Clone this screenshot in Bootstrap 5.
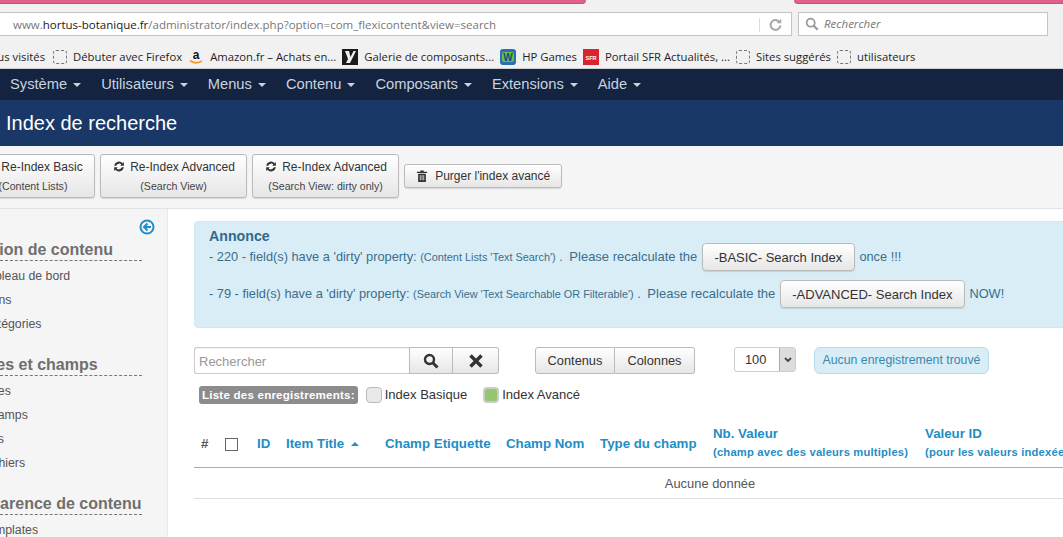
<!DOCTYPE html>
<html lang="fr">
<head>
<meta charset="UTF-8">
<title>Index de recherche</title>
<link href="https://cdn.jsdelivr.net/npm/bootstrap@5.3.0/dist/css/bootstrap.min.css" rel="stylesheet">
<style>
html, body { height: 537px; overflow: hidden; }
body { font-family: "Liberation Sans", Arial, sans-serif; font-size: 13px; color: #333; background: #fff; width: 1063px; }
.ff-chrome { font-family: "Open Sans", "Noto Sans", sans-serif; }

.tabstrip { height: 12px; background: #f1f1f1; }
.pink-tab { height: 4px; background: #e0608c; border-bottom: 1px solid #b9577c; }
.pink-tab.one { width: 586px; border-radius: 0 0 8px 0; }
.pink-tab.two { width: 269px; margin-left: auto; border-radius: 0 0 0 8px; }

.urlrow { height: 24px; background: #f1f1f1; padding-right: 10px; }
.urlbox { height: 24px; width: 792px; margin-right: 6px; background: #fff; border: 1px solid #c4c4c4; border-left: 0; color: #777; font-size: 11.5px; padding: 1px 0 0 13px; }
.urlbox b { font-weight: 400; color: #1a1a1a; }
.reload { width: 32px; height: 14px; margin-left: auto; border-left: 1px solid #ddd; }
.searchbox { width: 250px; height: 24px; background: #fff; border: 1px solid #c4c4c4; color: #777; font-style: italic; font-size: 11.5px; padding-left: 6px; gap: 5px; }

.bookmarks { height: 33px; background: #f1f1f1; border-bottom: 1px solid #cfcfcf; font-size: 11.3px; color: #1f1f1f; white-space: nowrap; padding-top: 10px; }
.bookmarks .bm-first { margin-left: -33px; margin-right: 8px; }
.bm { gap: 6px; margin-right: 6px; }
.bm-empty { width: 14px; height: 14px; border: 1px dashed #777; border-radius: 3px; flex: none; }
.bm-icon { width: 16px; height: 16px; flex: none; }

.adminnav { height: 31px; background: #14233f; color: #c9d2df; font-size: 14.7px; padding-left: 10px; gap: 20px; white-space: nowrap; }
.caret-down { width: 0; height: 0; border-left: 4px solid transparent; border-right: 4px solid transparent; border-top: 4px solid #c9d2df; display: inline-block; margin-left: 6px; vertical-align: 2px; }

.titlebar { height: 46px; background: #1a3867; color: #fff; font-size: 20px; padding-left: 6px; }

.toolbar { height: 63px; background: #f5f5f5; border-bottom: 1px solid #e3e3e3; padding-top: 8px; gap: 5px; }
.tb-btn { height: 44px; background: linear-gradient(#fff, #e6e6e6); border: 1px solid #bbb; border-radius: 3px; color: #333; font-size: 12px; line-height: 1; text-align: center; padding-top: 5px; box-shadow: 0 1px 1px rgba(0,0,0,.12); flex: none; white-space: nowrap; }
.tb-btn small { display: block; font-size: 10.6px; margin-top: 8px; color: #444; }
.tb-btn svg { vertical-align: -2px; margin-right: 4px; }
.tb-basic { width: 124px; margin-left: -29px; }
.tb-search, .tb-dirty { width: 147px; }
.tb-purge { height: 24px; width: 158px; margin-top: 10px; padding-top: 5px; }

.sidepane { width: 168px; height: 329px; background: #f5f5f5; border-right: 1px solid #e8e8e8; flex: none; overflow: hidden; position: relative; }
.collapse-arrow { position: absolute; top: 10px; left: 139px; }
.side-head { font-size: 16px; font-weight: 700; color: #6f6f6f; border-bottom: 1px dashed #777; width: 142px; white-space: nowrap; line-height: 18px; height: 20px; overflow: hidden; }
.side-head span { display: block; margin-left: -31px; }
.side-head.first { margin-top: 32px; }
.side-list { font-size: 12.3px; color: #555; white-space: nowrap; line-height: 24px; margin-bottom: 20px; padding-top: 3px; }
.side-list div { margin-left: -18px; }
.side-list div.short { margin-left: -22px; }

.mainpane { flex: 1 1 0; min-width: 0; padding: 12px 0 0 26px; overflow: hidden; }
.notice { width: 880px; height: 107px; background: #d9edf7; border: 1px solid #d0e8f2; border-radius: 4px; color: #3a6d8c; font-size: 12.8px; padding: 6px 14px; white-space: nowrap; }
.notice h6 { font-size: 14.2px; font-weight: 700; color: #2f6a8c; margin: 0; line-height: 16px; }
.notice small { font-size: 10.9px; }
.notice-row { height: 37px; margin-top: -1px; margin-bottom: 1px; }
.notice .big { font-size: 13px; margin-left: 3px; }
.gbtn { background: linear-gradient(#fff, #e6e6e6); border: 1px solid #bbb; border-radius: 4px; color: #333; height: 28px; line-height: 27px; font-size: 13px; display: inline-block; text-align: center; box-shadow: 0 1px 1px rgba(0,0,0,.12); margin: 0 1px; vertical-align: -1px; }
.gbtn.basic { width: 153px; }
.gbtn.adv { width: 185px; }

.filters { height: 27px; margin-top: 19px; }
.find-input { width: 215px; height: 27px; border: 1px solid #ccc; border-right: 0; border-radius: 3px 0 0 3px; color: #999; font-size: 13px; padding: 4px; background: #fff; box-shadow: inset 0 1px 1px rgba(0,0,0,.05); }
.seg { height: 27px; background: linear-gradient(#fff, #e6e6e6); border: 1px solid #bbb; font-size: 12.8px; color: #333; flex: none; padding-top: 1px; }
.seg-a { width: 44px; }
.seg-b { width: 46px; border-left: 0; border-radius: 0 3px 3px 0; }
.seg-c { width: 80px; margin-left: 36px; border-radius: 3px 0 0 3px; }
.seg-d { width: 80px; border-left: 0; border-radius: 0 3px 3px 0; }
.limit { width: 62px; height: 25px; margin-left: 39px; border: 1px solid #ccc; border-radius: 3px; background: #fff; font-size: 12.8px; padding-left: 10px; flex: none; overflow: hidden; }
.limit i { display: flex; width: 16px; height: 100%; margin-left: auto; background: #ddd; border-left: 1px solid #aaa; align-items: center; justify-content: center; }
.found { width: 175px; height: 27px; margin-left: 18px; background: #d9edf7; border: 1px solid #b7dcee; border-radius: 6px; color: #3a87ad; font-size: 12.3px; flex: none; }

.listrow { height: 18px; margin-top: 12px; padding-left: 5px; font-size: 13px; }
.list-tag { background: #8c8c8c; color: #fff; font-weight: 700; font-size: 11.6px; border-radius: 3px; height: 18px; padding: 0 3px; letter-spacing: .2px; }
.tick { width: 16px; height: 16px; border: 1px solid #bbb; border-radius: 4px; background: #e9e9e9; margin-left: 8px; margin-right: 3px; flex: none; }
.tick.on { background: #97c56f; border-width: 2px; border-color: #ccc; margin-left: 16px; margin-right: 3px; }

.headrow { width: 880px; height: 48px; margin-top: 16px; border-bottom: 1px solid #aaa; color: #1f8dc6; font-weight: 700; font-size: 13.3px; white-space: nowrap; padding-top: 16px; }
.headcell { flex: none; line-height: 16px; }
.headcell small { display: block; font-size: 11.2px; margin-top: 2px; letter-spacing: .2px; }
.hash { color: #555; width: 24px; padding-left: 7px; }
.headcheck { width: 13px; height: 13px; border: 1px solid #666; background: #fff; margin: 2px 19px 0 7px; flex: none; }
.sort-up { display: inline-block; width: 0; height: 0; border-left: 4px solid transparent; border-right: 4px solid transparent; border-bottom: 4px solid #1f8dc6; margin-left: 3px; vertical-align: 2px; }
.stacked { margin-top: -10px; }
.w-id { width: 29px; }
.w-title { width: 99px; }
.w-label { width: 121px; }
.w-name { width: 94px; }
.w-type { width: 113px; }
.w-multi { width: 212px; }
.emptyrow { width: 880px; height: 31px; border-bottom: 1px solid #ddd; text-align: center; line-height: 31px; font-size: 12.9px; color: #555; padding-left: 152px; }
</style>
</head>
<body>

<div class="tabstrip d-flex">
  <div class="pink-tab one"></div>
  <div class="pink-tab two"></div>
</div>

<div class="urlrow d-flex ff-chrome">
  <div class="urlbox d-flex align-items-center">
    <span>www.<b>hortus-botanique.fr</b>/administrator/index.php?option=com_flexicontent&amp;view=search</span>
    <div class="reload d-flex align-items-center justify-content-center">
      <svg width="13" height="13" viewBox="0 0 16 16"><path d="M13 5.2A6 6 0 1 0 14 9" fill="none" stroke="#a9a9a9" stroke-width="2.6"/><path d="M9.5 6.5H15V1z" fill="#a9a9a9"/></svg>
    </div>
  </div>
  <div class="searchbox d-flex align-items-center">
    <svg width="14" height="14" viewBox="0 0 16 16"><circle cx="6.5" cy="6.5" r="4.6" fill="none" stroke="#999" stroke-width="2"/><path d="M10 10l4.5 4.5" stroke="#999" stroke-width="2.6"/></svg>
    <span>Rechercher</span>
  </div>
</div>

<div class="bookmarks d-flex align-items-center ff-chrome">
  <span class="bm-first">Les plus visités</span>
  <span class="bm d-flex align-items-center"><i class="bm-empty"></i>Débuter avec Firefox</span>
  <span class="bm d-flex align-items-center">
    <svg class="bm-icon" viewBox="0 0 16 16"><text x="8" y="10" text-anchor="middle" font-family="Liberation Sans" font-weight="700" font-size="12" fill="#111">a</text><path d="M2 11.5c3.5 3 8.5 3 12 .3" fill="none" stroke="#f59a23" stroke-width="1.7"/></svg>Amazon.fr – Achats en...</span>
  <span class="bm d-flex align-items-center">
    <svg class="bm-icon" viewBox="0 0 16 16"><rect width="16" height="16" fill="#1b1b1b"/><path d="M3 2h4l1.5 6 3-6H14L8 14H4l2-4z" fill="#eee"/></svg>Galerie de composants...</span>
  <span class="bm d-flex align-items-center">
    <svg class="bm-icon" viewBox="0 0 16 16"><rect width="16" height="16" rx="3" fill="#2a6fb5"/><rect x="2" y="3" width="12" height="10" rx="2" fill="#6ec13f"/><text x="8" y="11.5" text-anchor="middle" font-family="Liberation Sans" font-weight="700" font-size="10" fill="#124a86">W</text></svg>HP Games</span>
  <span class="bm d-flex align-items-center">
    <svg class="bm-icon" viewBox="0 0 16 16"><rect width="16" height="16" fill="#d9232e"/><text x="8" y="10.5" text-anchor="middle" font-family="Liberation Sans" font-weight="700" font-size="5.5" fill="#fff">SFR</text></svg>Portail SFR Actualités, ...</span>
  <span class="bm d-flex align-items-center"><i class="bm-empty"></i>Sites suggérés</span>
  <span class="bm d-flex align-items-center"><i class="bm-empty"></i>utilisateurs</span>
</div>

<nav class="adminnav d-flex align-items-center">
  <div>Système<i class="caret-down"></i></div>
  <div>Utilisateurs<i class="caret-down"></i></div>
  <div>Menus<i class="caret-down"></i></div>
  <div>Contenu<i class="caret-down"></i></div>
  <div>Composants<i class="caret-down"></i></div>
  <div>Extensions<i class="caret-down"></i></div>
  <div>Aide<i class="caret-down"></i></div>
</nav>

<div class="titlebar d-flex align-items-center">Index de recherche</div>

<div class="toolbar d-flex">
  <div class="tb-btn tb-basic"><svg width="14" height="13" viewBox="0 0 16 16"><path d="M2 7a6 6 0 0 1 10.5-3L14 2.5V7H9.5L11 5.5A4 4 0 0 0 4.5 7zM14 9a6 6 0 0 1-10.5 3L2 13.5V9h4.5L5 10.5A4 4 0 0 0 11.5 9z" fill="#333"/></svg>Re-Index Basic<small>(Content Lists)</small></div>
  <div class="tb-btn tb-search"><svg width="14" height="13" viewBox="0 0 16 16"><path d="M2 7a6 6 0 0 1 10.5-3L14 2.5V7H9.5L11 5.5A4 4 0 0 0 4.5 7zM14 9a6 6 0 0 1-10.5 3L2 13.5V9h4.5L5 10.5A4 4 0 0 0 11.5 9z" fill="#333"/></svg>Re-Index Advanced<small>(Search View)</small></div>
  <div class="tb-btn tb-dirty"><svg width="14" height="13" viewBox="0 0 16 16"><path d="M2 7a6 6 0 0 1 10.5-3L14 2.5V7H9.5L11 5.5A4 4 0 0 0 4.5 7zM14 9a6 6 0 0 1-10.5 3L2 13.5V9h4.5L5 10.5A4 4 0 0 0 11.5 9z" fill="#333"/></svg>Re-Index Advanced<small>(Search View: dirty only)</small></div>
  <div class="tb-btn tb-purge"><svg width="12" height="12" viewBox="0 0 14 14"><path d="M1 2h12v1.5H1zM5 .5h4V2H5zM2.5 4.5h9V14h-9z" fill="#333"/><path d="M5 6v6M7 6v6M9 6v6" stroke="#eee" stroke-width=".9"/></svg> Purger l'index avancé</div>
</div>

<div class="d-flex">
  <aside class="sidepane">
    <svg class="collapse-arrow" width="16" height="16" viewBox="0 0 16 16"><circle cx="8" cy="8" r="6.5" fill="none" stroke="#1f8dc6" stroke-width="2"/><path d="M8.5 4.5L5 8l3.5 3.5M5.5 8H12" fill="none" stroke="#1f8dc6" stroke-width="2"/></svg>
    <div class="side-head first"><span>Édition de contenu</span></div>
    <div class="side-list">
      <div>Tableau de bord</div>
      <div>Liens</div>
      <div>Catégories</div>
    </div>
    <div class="side-head"><span>Types et champs</span></div>
    <div class="side-list">
      <div class="short">Types</div>
      <div>Champs</div>
      <div class="short">Tags</div>
      <div>Fichiers</div>
    </div>
    <div class="side-head"><span>Apparence de contenu</span></div>
    <div class="side-list">
      <div>Templates</div>
    </div>
  </aside>

  <main class="mainpane">
    <div class="notice">
      <h6>Annonce</h6>
      <div class="notice-row">- 220 - field(s) have a 'dirty' property: <small>(Content Lists 'Text Search')</small> . <span class="big">Please recalculate the</span> <span class="gbtn basic">-BASIC- Search Index</span> once !!!</div>
      <div class="notice-row">- 79 - field(s) have a 'dirty' property: <small>(Search View 'Text Searchable OR Filterable')</small> . <span class="big">Please recalculate the</span> <span class="gbtn adv">-ADVANCED- Search Index</span> NOW!</div>
    </div>

    <div class="filters d-flex">
      <div class="find-input">Rechercher</div>
      <div class="seg seg-a d-flex align-items-center justify-content-center"><svg width="16" height="16" viewBox="0 0 16 16"><circle cx="6.5" cy="6.5" r="4.5" fill="none" stroke="#333" stroke-width="2.4"/><path d="M10 10l4.5 4.5" stroke="#333" stroke-width="3"/></svg></div>
      <div class="seg seg-b d-flex align-items-center justify-content-center"><svg width="14" height="14" viewBox="0 0 14 14"><path d="M1.5 1.5l11 11M12.5 1.5l-11 11" stroke="#333" stroke-width="3.4"/></svg></div>
      <div class="seg seg-c d-flex align-items-center justify-content-center">Contenus</div>
      <div class="seg seg-d d-flex align-items-center justify-content-center">Colonnes</div>
      <div class="limit d-flex align-items-center">100<i><svg width="8" height="6" viewBox="0 0 8 6"><path d="M1 1l3 3 3-3" fill="none" stroke="#444" stroke-width="1.8"/></svg></i></div>
      <div class="found d-flex align-items-center justify-content-center">Aucun enregistrement trouvé</div>
    </div>

    <div class="listrow d-flex align-items-center">
      <span class="list-tag d-flex align-items-center">Liste des enregistrements:</span>
      <i class="tick"></i>Index Basique
      <i class="tick on"></i>Index Avancé
    </div>

    <div class="headrow d-flex">
      <div class="headcell hash">#</div>
      <i class="headcheck"></i>
      <div class="headcell w-id">ID</div>
      <div class="headcell w-title">Item Title <i class="sort-up"></i></div>
      <div class="headcell w-label">Champ Etiquette</div>
      <div class="headcell w-name">Champ Nom</div>
      <div class="headcell w-type">Type du champ</div>
      <div class="headcell stacked w-multi">Nb. Valeur<small>(champ avec des valeurs multiples)</small></div>
      <div class="headcell stacked">Valeur ID<small>(pour les valeurs indexées)</small></div>
    </div>
    <div class="emptyrow">Aucune donnée</div>
  </main>
</div>

<script src="https://cdn.jsdelivr.net/npm/bootstrap@5.3.0/dist/js/bootstrap.bundle.min.js"></script>
</body>
</html>
